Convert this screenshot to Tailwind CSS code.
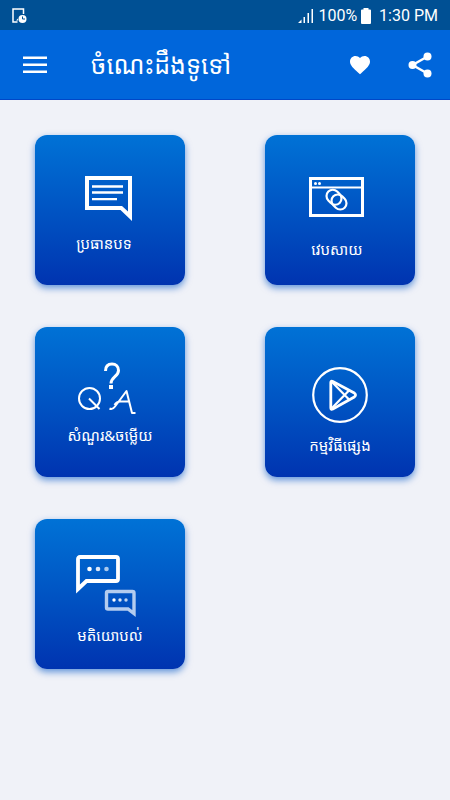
<!DOCTYPE html>
<html lang="km">
<head>
<meta charset="utf-8">
<meta name="viewport" content="width=device-width, initial-scale=1">
<title>ចំណេះដឹងទូទៅ</title>
<script src="https://cdn.jsdelivr.net/npm/@tailwindcss/browser@4"></script>
</head>
<body class="min-h-screen bg-[#f0f2f8] font-['Noto_Sans_Khmer','Noto_Sans','DejaVu_Sans',sans-serif] text-white">
<div class="flex h-[30px] items-center justify-between bg-[#005094] px-3 pt-px font-[Roboto,sans-serif] text-base">
  <svg class="h-4 w-4" viewBox="0 0 16 16" fill="none" aria-hidden="true"><path d="M5.500 14H1V1h10.500v5" stroke="#fff" stroke-width="1.500"/><circle cx="10.500" cy="11" r="4" fill="#fff"/><path d="M10.500 8.500V11H13" stroke="#005094"/><path d="M4 12.500l2-2v2z" fill="#fff"/></svg>
  <div class="flex items-center gap-1">
    <svg class="h-4 w-4" viewBox="0 0 16 16" fill="#fff" aria-hidden="true"><path d="M0 15l3.500-3.500V15zM5.500 9H7v6H5.500zM9.500 5H11v10H9.500zM13.500 1H15v14h-1.500z"/></svg>
    <span>100%</span>
    <svg class="h-4 w-[10px]" viewBox="0 0 10 16" fill="#fff" aria-hidden="true"><path d="M2.500 0h5v1.500H9a1 1 0 0 1 1 1V15a1 1 0 0 1-1 1H1a1 1 0 0 1-1-1V2.500a1 1 0 0 1 1-1h1.500z"/></svg>
    <span class="pl-1">1:30 PM</span>
  </div>
</div>
<header class="flex h-[70px] items-center border-b border-[#0047c8] bg-[#0066db] pr-4 pl-[23px]">
  <button class="h-6 w-6" aria-label="Menu"><svg class="h-6 w-6" viewBox="0 0 24 24" fill="#fff"><path d="M0 3.500h24v2.500H0zM0 10.500h24v2.500H0zM0 17.500h24v2.500H0z"/></svg></button>
  <h1 class="ml-11 flex-1 text-[25px] whitespace-nowrap">ចំណេះដឹងទូទៅ</h1>
  <button class="mr-[34px] h-6 w-6" aria-label="Favourites"><svg class="h-6 w-6" viewBox="0 0 24 24" fill="#fff"><path d="M12 21.350l-1.450-1.320C5.400 15.360 2 12.280 2 8.500 2 5.420 4.420 3 7.500 3c1.740 0 3.410.81 4.500 2.090C13.090 3.810 14.760 3 16.500 3 19.580 3 22 5.420 22 8.500c0 3.780-3.400 6.860-8.550 11.540z"/></svg></button>
  <button class="h-7 w-7" aria-label="Share"><svg class="h-7 w-7" viewBox="0 0 28 28" fill="#fff"><path d="M21.500 5.500L6.500 14l15 8.500" fill="none" stroke="#fff" stroke-width="2.400"/><circle cx="21.500" cy="5.500" r="4"/><circle cx="6.500" cy="14" r="4"/><circle cx="21.500" cy="22.500" r="4"/></svg></button>
</header>
<main class="grid grid-cols-[150px_150px] justify-between gap-y-[42px] px-[35px] pt-[35px] pb-8 text-[15px]">
  <a href="#topics" class="flex h-[150px] flex-col items-center rounded-xl bg-linear-to-b from-[#0072d6] to-[#0033b0] pt-10 shadow-[0_3px_7px_#0055c499]">
    <svg class="mr-2 h-12 w-14" viewBox="0 0 56 48" fill="none" aria-hidden="true"><path fill-rule="evenodd" d="M7 1h47v45L42.500 35H7zM11 5v26h33l6 5.500V5z" fill="#fff"/><path d="M14 11.500h31M14 17.500h31M14 24.200h25" stroke="#fff" stroke-width="2.300"/></svg>
    <span class="mt-2.5 mr-3 leading-5">ប្រធានបទ</span>
  </a>
  <a href="#website" class="flex h-[150px] flex-col items-center rounded-xl bg-linear-to-b from-[#0072d6] to-[#0033b0] pt-10 shadow-[0_3px_7px_#0055c499]">
    <svg class="mr-2 h-12 w-14" viewBox="0 0 56 48" fill="none" stroke="#fff" aria-hidden="true"><path d="M2.500 3.500h52v37h-52z" stroke-width="3"/><path d="M2.500 12.500h52" stroke-width="2"/><circle cx="7.500" cy="8.500" r="1.500" fill="#fff" stroke="none"/><circle cx="11.500" cy="8.500" r="1.500" fill="#fff" stroke="none"/><g stroke-width="2.200"><rect x="18" y="16" width="16" height="12.500" rx="6.250" transform="rotate(45 26 22.250)"/><rect x="23" y="20.750" width="16" height="12.500" rx="6.250" transform="rotate(45 31 27)"/></g></svg>
    <span class="mt-4 mr-1.5 leading-5">វេបសាយ</span>
  </a>
  <a href="#questions" class="flex h-[150px] flex-col items-center rounded-xl bg-linear-to-b from-[#0072d6] to-[#0033b0] pt-8 shadow-[0_3px_7px_#0055c499]">
    <svg class="mr-2 h-14 w-15" viewBox="0 0 60 56" fill="none" stroke="#fff" aria-hidden="true"><path d="M29.500 12c0-4.500 2.500-7 6.500-7s6.500 2.500 6.500 6.500c0 6-7.500 6.500-7.500 13" stroke-width="3"/><path d="M33 26h4v4h-4z" fill="#fff" stroke="none"/><g stroke-width="2"><circle cx="13.500" cy="39.500" r="10.500"/><path d="M13 39.500l10.500 10.500M33.500 49.500q3 1.500 5.500-2L50.500 32l5.500 22h3.500M38.500 46q2-3.500 6-3.500h9" stroke-linejoin="round"/></g></svg>
    <span class="mt-2.5 leading-5 whitespace-nowrap">សំណួរ&amp;ចម្លើយ</span>
  </a>
  <a href="#apps" class="flex h-[150px] flex-col items-center rounded-xl bg-linear-to-b from-[#0072d6] to-[#0033b0] pt-10 shadow-[0_3px_7px_#0055c499]">
    <svg class="h-14 w-14" viewBox="0 0 56 56" fill="none" stroke="#fff" stroke-linejoin="round" stroke-linecap="round" aria-hidden="true"><circle cx="28" cy="28" r="26.800" stroke-width="2.200"/><path d="M18.800 15.500q0-2 2-1l21.500 11.500q2.500 2 0 4L20.800 42q-2 1-2-1z" stroke-width="2.800"/><path d="M20 15l16.500 17M20 41l16.500-17" stroke-width="2.200"/></svg>
    <span class="mt-3 leading-5 whitespace-nowrap">កម្មវិធីផ្សេង</span>
  </a>
  <a href="#feedback" class="flex h-[150px] flex-col items-center rounded-xl bg-linear-to-b from-[#0072d6] to-[#0033b0] pt-9 shadow-[0_3px_7px_#0055c499]">
    <svg class="mr-2 h-16 w-15" viewBox="0 0 60 64" fill="none" aria-hidden="true"><path d="M2 34V4q0-2 2-2h36q2 0 2 2v20q0 2-2 2H10.500z" stroke="#fff" stroke-width="3.800"/><circle cx="13.500" cy="14" r="2.300" fill="#fff"/><circle cx="22" cy="14" r="2.300" fill="#dce8f8"/><circle cx="30.500" cy="14" r="2.300" fill="#a9c9ee"/><path d="M58 58.500V38q0-1.500-1.500-1.500H32q-1.500 0-1.500 1.500v14.500q0 1.500 1.500 1.500h20z" stroke="#b3ccef" stroke-width="3.400"/><g fill="#fff"><circle cx="38" cy="45" r="1.700"/><circle cx="44" cy="45" r="1.700" opacity=".85"/><circle cx="50" cy="45" r="1.700" opacity=".75"/></g></svg>
    <span class="mt-1.5 leading-5">មតិយោបល់</span>
  </a>
</main>
</body>
</html>
